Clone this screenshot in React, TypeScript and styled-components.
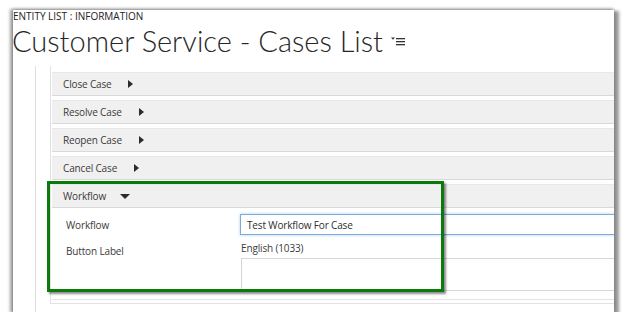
import React from "react";
import styled, { createGlobalStyle } from "styled-components";

const GlobalStyle = createGlobalStyle`
  body {
    margin: 0;
    background: #ffffff;
    font-family: "Open Sans", "Noto Sans", sans-serif;
  }
`;

const Frame = styled.div`
  position: relative;
  margin: 10px 0 0 13px;
  width: 601px;
  height: 302px;
  background: #ffffff;
  overflow: hidden;
  box-shadow: -2px 0 3px 1px rgba(0, 0, 0, 0.35), 3px 3px 3px 2px rgba(0, 0, 0, 0.4),
    0 -1px 3px rgba(0, 0, 0, 0.15);
`;

const EntityLabel = styled.div`
  font-size: 10px;
  line-height: 13px;
  color: #222;
  letter-spacing: 0;
`;

const Title = styled.h1`
  display: flex;
  align-items: center;
  gap: 8px;
  margin: 0 0 0 -1px;
  font-family: "Lato", "Open Sans", sans-serif;
  font-weight: 300;
  font-size: 29px;
  line-height: 36px;
  color: #262626;
`;

const Body = styled.div`
  display: flex;
  margin-top: 7px;
  padding-left: 22px;
`;

const Gutter = styled.div`
  flex: 1;
  border-left: 1px solid #dedede;
  padding-left: 14px;
  height: 250px;
`;

const Sections = styled.div`
  border-left: 1px solid #e2e2e2;
  border-bottom: 1px solid #e2e2e2;
  padding: 6px 0 3px 1px;
`;

const SectionBar = styled.div<{ $gap: number }>`
  display: flex;
  align-items: center;
  gap: ${(p) => p.$gap}px;
  height: 22px;
  padding-left: 11px;
  margin-bottom: 4px;
  background: #f1f0f0;
  border-top: 1px solid #e8e8e8;
  border-bottom: 1px solid #d9d9d9;
  font-size: 10px;
  letter-spacing: -0.15px;
  color: #3a3a3a;
`;

const CaretRight = styled.span`
  width: 0;
  height: 0;
  border-top: 4px solid transparent;
  border-bottom: 4px solid transparent;
  border-left: 5px solid #2b2b2b;
`;

const CaretDown = styled.span`
  width: 0;
  height: 0;
  border-left: 5px solid transparent;
  border-right: 5px solid transparent;
  border-top: 5px solid #2b2b2b;
`;

const WorkflowPanel = styled.div`
  border-bottom: 1px solid #e4e4e4;
  padding-bottom: 8px;
  margin-top: -4px;
`;

const Form = styled.div`
  display: grid;
  grid-template-columns: 174px 1fr;
  align-items: center;
  row-gap: 6px;
  padding: 6px 0 0 14px;
  font-size: 10px;
  letter-spacing: -0.15px;
  color: #3a3a3a;
`;

const Label = styled.div<{ $top?: boolean }>`
  align-self: ${(p) => (p.$top ? "start" : "center")};
  padding-top: ${(p) => (p.$top ? 3 : 0)}px;
`;

const Input = styled.div`
  height: 19px;
  display: flex;
  align-items: center;
  padding-left: 6px;
  margin-right: -10px;
  border: 1px solid #79abdd;
  box-shadow: 0 0 3px rgba(110, 170, 230, 0.55);
  color: #2e2e2e;
`;

const LabelField = styled.div`
  display: flex;
  flex-direction: column;
  gap: 3px;
  padding-left: 1px;
  margin-right: -10px;
`;

const TextArea = styled.div`
  height: 31px;
  border: 1px solid #d6d6d6;
`;

const Highlight = styled.div`
  position: absolute;
  left: 34px;
  top: 171px;
  width: 391px;
  height: 105px;
  border: 3px solid #0b7a0b;
  box-shadow: 2px 2px 2px rgba(0, 0, 0, 0.45);
  pointer-events: none;
`;

const sections = [
  { name: "Close Case", gap: 16 },
  { name: "Resolve Case", gap: 17 },
  { name: "Reopen Case", gap: 17 },
  { name: "Cancel Case", gap: 17 },
];

function ViewMenuIcon() {
  return (
    <svg width="15" height="9" viewBox="0 0 15 9">
      <path d="M0 0.5 H4 L2 2.8 Z" fill="#333" />
      <rect x="5" y="1" width="9" height="1.3" fill="#333" />
      <rect x="5" y="4" width="9" height="1.3" fill="#333" />
      <rect x="5" y="7" width="9" height="1.3" fill="#333" />
    </svg>
  );
}

export default function App() {
  return (
    <>
      <GlobalStyle />
      <Frame>
        <EntityLabel>ENTITY LIST : INFORMATION</EntityLabel>
        <Title>
          Customer Service - Cases List
          <ViewMenuIcon />
        </Title>
        <Body>
          <Gutter>
            <Sections>
              {sections.map((s) => (
                <SectionBar key={s.name} $gap={s.gap}>
                  {s.name}
                  <CaretRight />
                </SectionBar>
              ))}
              <SectionBar $gap={14}>
                Workflow
                <CaretDown />
              </SectionBar>
              <WorkflowPanel>
                <Form>
                  <Label>Workflow</Label>
                  <Input>Test Workflow For Case</Input>
                  <Label $top>Button Label</Label>
                  <LabelField>
                    English (1033)
                    <TextArea />
                  </LabelField>
                </Form>
              </WorkflowPanel>
            </Sections>
          </Gutter>
        </Body>
        <Highlight />
      </Frame>
    </>
  );
}
